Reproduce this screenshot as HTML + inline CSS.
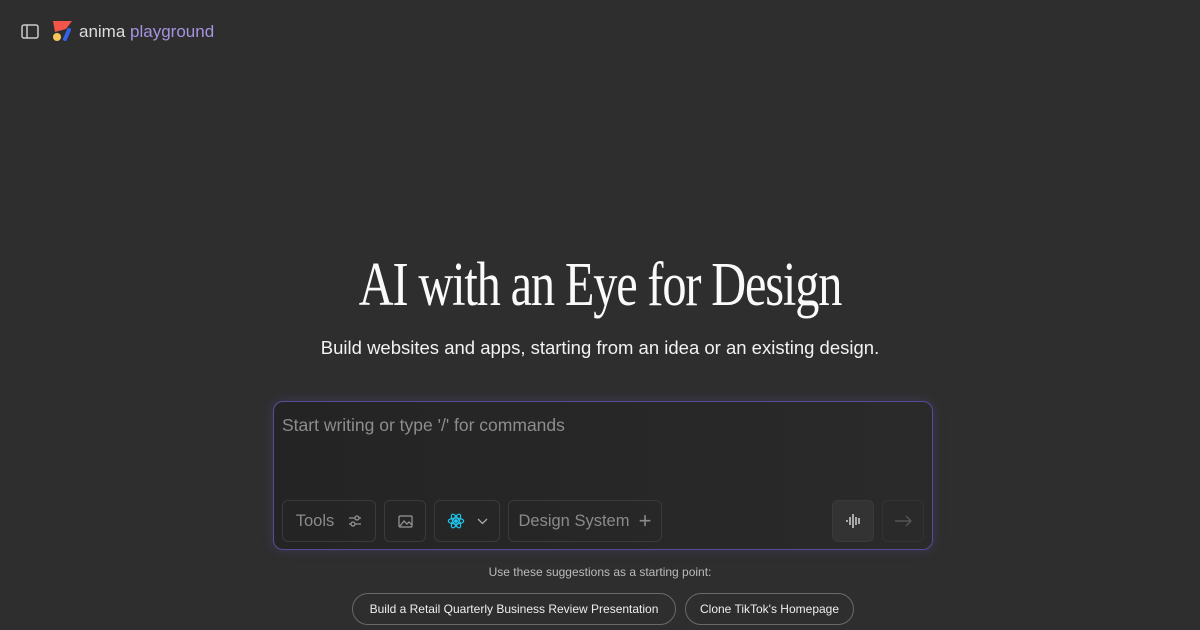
<!DOCTYPE html>
<html><head><style>
body{margin:0;width:1200px;height:630px;background:#2e2e2e;font-family:"Liberation Sans",sans-serif;overflow:hidden;position:relative;color:#fff}
.abs{position:absolute}
.btn{position:absolute;top:500px;height:42px;border:1px solid #3a3a3a;border-radius:6px;box-sizing:border-box;display:flex;align-items:center;justify-content:center;color:#8a8a8a;font-size:16.5px}
.pill{position:absolute;top:593px;height:32px;border:1px solid #6a6a6a;border-radius:16px;box-sizing:border-box;display:flex;align-items:center;justify-content:center;font-size:12px;color:#eee}
</style></head><body>
<svg class="abs" style="left:21px;top:24px" width="18" height="15" viewBox="0 0 18 15"><rect x="1" y="1" width="16" height="13" rx="2" fill="none" stroke="#ccc" stroke-width="1.5"/><line x1="6" y1="1" x2="6" y2="14" stroke="#ccc" stroke-width="1.5"/></svg>
<svg class="abs" style="left:53px;top:21px" width="20" height="21" viewBox="0 0 20 21"><polygon points="0,0 19,0 13,8 2,11" fill="#f2564b"/><circle cx="4" cy="16" r="4" fill="#f7c65c"/><line x1="16" y1="9" x2="12" y2="18" stroke="#3561e8" stroke-width="4" stroke-linecap="round"/></svg>
<div class="abs" style="left:79px;top:22px;font-size:17px;color:#ddd">anima <span style="color:#a693e0">playground</span></div>
<div class="abs" style="left:0;width:1200px;top:250px;text-align:center;font-family:'Liberation Serif',serif;font-size:62px;letter-spacing:-1.5px;transform:scaleX(0.78);color:#fafafa">AI with an Eye for Design</div>
<div class="abs" style="left:0;width:1200px;top:337px;text-align:center;font-size:18.5px;color:#f2f2f2">Build websites and apps, starting from an idea or an existing design.</div>
<div class="abs" style="left:273px;top:401px;width:660px;height:149px;box-sizing:border-box;border:1px solid #5a4a9a;border-radius:10px;background:linear-gradient(90deg,#242424,#2a2a2a);box-shadow:0 0 12px rgba(110,90,200,0.25)"></div>
<div class="abs" style="left:282px;top:415px;font-size:17.5px;color:#8d8d8d">Start writing or type '/' for commands</div>
<div class="btn" style="left:282px;width:94px;gap:14px">Tools<svg width="14" height="12" viewBox="0 0 14 12" fill="none" stroke="#999" stroke-width="1.2"><line x1="1" y1="3" x2="13" y2="3"/><line x1="1" y1="9" x2="13" y2="9"/><circle cx="9" cy="3" r="2" fill="#262626"/><circle cx="5" cy="9" r="2" fill="#262626"/></svg></div>
<div class="btn" style="left:384px;width:42px"><svg width="15" height="13" viewBox="0 0 15 13"><rect x="1" y="1" width="13" height="11" rx="1" fill="none" stroke="#999" stroke-width="1.2"/><path d="M2 11 L6 6 L9 9 L11 7 L14 10" fill="none" stroke="#999" stroke-width="1.2"/></svg></div>
<div class="btn" style="left:434px;width:66px;gap:12px"><svg width="18" height="18" viewBox="-10 -10 20 20" fill="none" stroke="#1ec8f0" stroke-width="1.3"><ellipse rx="8.5" ry="3.3"/><ellipse rx="8.5" ry="3.3" transform="rotate(60)"/><ellipse rx="8.5" ry="3.3" transform="rotate(120)"/><circle r="1.5" fill="#1ec8f0"/></svg><svg width="11" height="7" viewBox="0 0 11 7"><path d="M1 1 L5.5 5.5 L10 1" fill="none" stroke="#aaa" stroke-width="1.3"/></svg></div>
<div class="btn" style="left:508px;width:154px">Design System&nbsp;&nbsp;<span style="font-size:22px;font-weight:300">+</span></div>
<div class="btn" style="left:832px;width:42px;background:#333"><svg width="16" height="16" viewBox="0 0 16 16" stroke="#ddd" stroke-width="1.4"><line x1="2" y1="7" x2="2" y2="9"/><line x1="5" y1="4" x2="5" y2="12"/><line x1="8" y1="1" x2="8" y2="15"/><line x1="11" y1="4" x2="11" y2="12"/><line x1="14" y1="5" x2="14" y2="11"/></svg></div>
<div class="btn" style="left:882px;width:42px;border-color:#333"><svg width="18" height="12" viewBox="0 0 18 12"><path d="M1 6 H17 M12 1 L17 6 L12 11" fill="none" stroke="#555" stroke-width="1.4"/></svg></div>
<div class="abs" style="left:0;width:1200px;top:565px;text-align:center;font-size:12px;color:#bbb">Use these suggestions as a starting point:</div>
<div class="pill" style="left:352px;width:324px">Build a Retail Quarterly Business Review Presentation</div>
<div class="pill" style="left:685px;width:169px">Clone TikTok's Homepage</div>
</body></html>
